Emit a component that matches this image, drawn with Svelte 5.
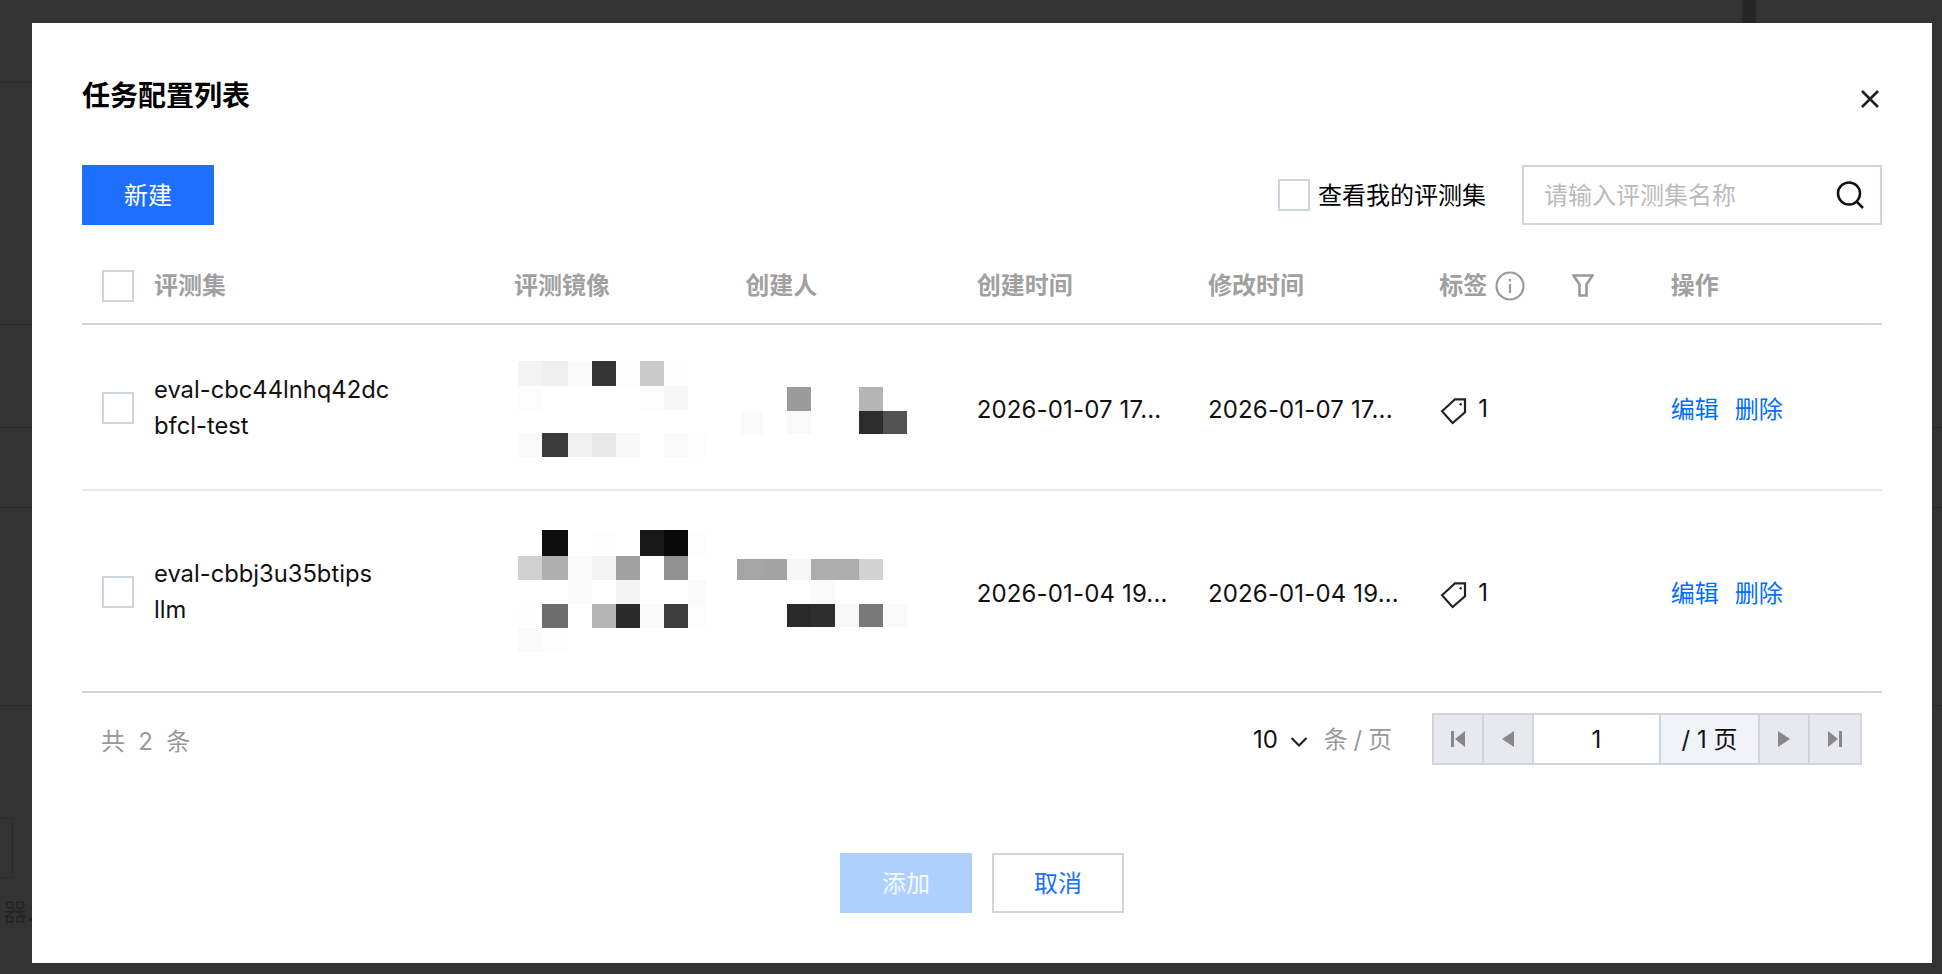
<script>
  // blurred cells: rows of [width in cols is fixed, colour or null]
  const wide = [24, 26, 24, 24, 24, 24, 24, 18]
  const even = [22, 24, 24, 24, 24, 24, 24, 24]
  const mosaics = {
    a: {
      cols: wide,
      rows: [25, 24, 23, 24],
      dx: 4,
      dy: 4,
      cells: [
        ['#f3f3f3', '#efefef', '#fbfbfb', '#333333', '#fdfdfd', '#cacaca', '#fcfcfc', null],
        ['#fcfcfc', null, null, null, null, '#fcfcfc', '#f6f6f6', null],
        [null, null, null, null, null, null, null, null],
        ['#fafafa', '#3b3b3b', '#f0f0f0', '#e8e8e8', '#f8f8f8', null, '#f9f9f9', '#fdfdfd']
      ]
    },
    b: {
      cols: even,
      rows: [24, 23],
      dx: -4,
      dy: 7,
      cells: [
        [null, null, '#9b9b9b', null, null, '#b5b5b5', null, null],
        ['#fafafa', null, '#f9f9f9', null, null, '#2d2d2d', '#525252', null]
      ]
    },
    c: {
      cols: wide,
      rows: [26, 24, 24, 24, 24],
      dx: 4,
      dy: 0,
      cells: [
        [null, '#0e0e0e', null, '#fdfdfd', null, '#181818', '#090909', '#fdfdfd'],
        ['#d1d1d1', '#b0b0b0', '#fbfbfb', '#f3f3f3', '#a1a1a1', null, '#919191', null],
        [null, null, '#fbfbfb', null, '#f4f4f4', null, null, '#fafafa'],
        ['#fefefe', '#6c6c6c', null, '#b4b4b4', '#2b2b2b', '#f9f9f9', '#3e3e3e', '#fdfdfd'],
        ['#fafafa', '#fdfdfd', null, null, null, null, null, null]
      ]
    },
    d: {
      cols: [26, 24, 24, 24, 24, 24, 24],
      rows: [21, 24, 23],
      dx: -8,
      dy: 3,
      cells: [
        ['#a5a5a5', '#a3a3a3', '#f7f7f7', '#adadad', '#adadad', '#d2d2d2', null],
        [null, null, null, '#fafafa', null, null, null],
        [null, null, '#2a2a2a', '#2e2e2e', '#f8f8f8', '#797979', '#fafafa']
      ]
    }
  }

  const rows = [
    { name: ['eval-cbc44lnhq42dc', 'bfcl-test'], image: mosaics.a, owner: mosaics.b, created: '2026-01-07 17...', updated: '2026-01-07 17...' },
    { name: ['eval-cbbj3u35btips', 'llm'], image: mosaics.c, owner: mosaics.d, created: '2026-01-04 19...', updated: '2026-01-04 19...' }
  ]
</script>

{#snippet mosaic(m)}
  <div
    class="mosaic"
    style="grid-template-columns: {m.cols.map((c) => c + 'px').join(' ')}; grid-template-rows: {m.rows.map((r) => r + 'px').join(' ')}; margin: {m.dy}px 0 0 {m.dx}px"
  >
    {#each m.cells as line}
      {#each line as colour}
        <span style="background: {colour ?? 'transparent'}"></span>
      {/each}
    {/each}
  </div>
{/snippet}

<div class="page">
  <i class="bg-line short" style="top: 82px"></i>
  <i class="bg-line short" style="top: 324px"></i>
  <i class="bg-line" style="top: 427px"></i>
  <i class="bg-line" style="top: 507px"></i>
  <i class="bg-line" style="top: 705px"></i>
  <i class="bg-strip"></i>
  <i class="bg-box"></i>
  <span class="bg-text">器.</span>

  <div class="dialog">
    <header class="head">
      <h2>任务配置列表</h2>
      <button class="close" aria-label="关闭">
        <svg width="20" height="20" viewBox="0 0 20 20"><path d="M2 2l16 16M18 2L2 18" stroke="#1f1f1f" stroke-width="2.6" fill="none" /></svg>
      </button>
    </header>

    <div class="toolbar">
      <button class="btn primary">新建</button>
      <div class="tools">
        <label class="mine"><span class="check"></span><span class="lift">查看我的评测集</span></label>
        <div class="search">
          <span class="placeholder lift">请输入评测集名称</span>
          <svg width="28" height="28" viewBox="0 0 28 28" fill="none" stroke="#111" stroke-width="2.5">
            <circle cx="13" cy="12.5" r="11" />
            <path d="M20.5 20.5l6.5 6.5" />
          </svg>
        </div>
      </div>
    </div>

    <div class="table">
      <div class="tr th">
        <div class="td first"><span class="check"></span>评测集</div>
        <div class="td">评测镜像</div>
        <div class="td">创建人</div>
        <div class="td">创建时间</div>
        <div class="td">修改时间</div>
        <div class="td tags">
          标签
          <svg class="info" width="30" height="30" viewBox="0 0 30 30" fill="none" stroke="#999" stroke-width="2.2">
            <circle cx="15" cy="15" r="13.5" />
            <path d="M15 13v9" />
            <path d="M15 8v2.6" />
          </svg>
          <svg class="filter" width="22" height="23" viewBox="0 0 22 23" fill="none" stroke="#999" stroke-width="2.6">
            <path d="M1.5 1.5h19l-6 9v11h-7v-11z" />
          </svg>
        </div>
        <div class="td">操作</div>
      </div>

      {#each rows as row, i}
        <div class="tr body" class:second={i === 1}>
          <div class="td first shift">
            <span class="check"></span>
            <div class="name">{row.name[0]}<br />{row.name[1]}</div>
          </div>
          <div class="td">{@render mosaic(row.image)}</div>
          <div class="td">{@render mosaic(row.owner)}</div>
          <div class="td date">{row.created}</div>
          <div class="td date">{row.updated}</div>
          <div class="td tagcount">
            <svg width="28" height="28" viewBox="0 0 28 28" fill="none" stroke="#222" stroke-width="2.2">
              <path d="M3 14.200L16 2.300h10v13L13.600 26z" />
              <circle cx="21.700" cy="7.300" r="1.200" fill="#222" stroke="none" />
            </svg>
            <span>1</span>
          </div>
          <div class="td actions"><a href="#edit">编辑</a><a href="#delete">删除</a></div>
        </div>
      {/each}

      <div class="pager">
        <span class="total">共 2 条</span>
        <div class="size">
          <span>10</span>
          <svg width="18" height="12" viewBox="0 0 18 12" fill="none" stroke="#222" stroke-width="2.200"><path d="M1.500 2l7.500 7.500L16.500 2" /></svg>
          <span class="unit">条 / 页</span>
        </div>
        <div class="pages">
          <button class="nav" aria-label="首页">
            <svg width="16" height="18" viewBox="0 0 16 18" fill="#888"><path d="M1 1h3v16H1zM15 1v16L5 9z" /></svg>
          </button>
          <button class="nav" aria-label="上一页">
            <svg width="14" height="18" viewBox="0 0 14 18" fill="#888"><path d="M13 1v16L1 9z" /></svg>
          </button>
          <div class="current">1</div>
          <div class="count">/ 1 页</div>
          <button class="nav" aria-label="下一页">
            <svg width="14" height="18" viewBox="0 0 14 18" fill="#888"><path d="M1 1v16l12-8z" /></svg>
          </button>
          <button class="nav" aria-label="末页">
            <svg width="16" height="18" viewBox="0 0 16 18" fill="#888"><path d="M1 1v16l10-8zM12 1h3v16h-3z" /></svg>
          </button>
        </div>
      </div>
    </div>

    <footer class="foot">
      <button class="btn disabled">添加</button>
      <button class="btn ghost">取消</button>
    </footer>
  </div>
</div>

<style>
  :global(body) {
    margin: 0;
    background: #333;
  }

  .page {
    position: relative;
    height: 974px;
    padding: 23px 10px 11px 32px;
    box-sizing: border-box;
    overflow: hidden;
    font-family: Inter, "Noto Sans CJK SC", sans-serif;
    font-size: 24px;
    line-height: 36px;
    color: #111;
  }

  .bg-line {
    position: absolute;
    left: 0;
    right: 0;
    height: 1px;
    background: #2b2b2b;
  }

  .bg-line.short {
    right: auto;
    width: 32px;
  }

  .bg-strip {
    position: absolute;
    top: 0;
    left: 1742px;
    width: 14px;
    height: 23px;
    background: #262626;
  }

  .bg-box {
    position: absolute;
    top: 818px;
    left: -2px;
    width: 13px;
    height: 58px;
    border: 1px solid #2a2a2a;
  }

  .bg-text {
    position: absolute;
    top: 895px;
    left: 3px;
    color: #242424;
  }

  .dialog {
    position: relative;
    height: 100%;
    padding: 0 50px;
    box-sizing: border-box;
    background: #fff;
  }

  .head {
    display: flex;
    justify-content: space-between;
    height: 142px;
  }

  h2 {
    margin: 53px 0 0;
    font-size: 28px;
    line-height: 40px;
    font-weight: 700;
    color: #000;
  }

  .close {
    width: 20px;
    height: 20px;
    margin: 66px 2px 0 0;
    padding: 0;
    border: 0;
    background: none;
  }

  .close svg,
  .nav svg {
    display: block;
  }

  .toolbar {
    display: flex;
    justify-content: space-between;
    align-items: center;
    height: 60px;
  }

  .btn {
    width: 132px;
    height: 60px;
    padding: 2px 0 0;
    border: 0;
    font: inherit;
  }

  .primary {
    background: #1d6fff;
    color: #fff;
  }

  .disabled {
    background: #aed0ff;
    color: #f6faff;
  }

  .ghost {
    border: 2px solid #cfd5de;
    background: #fff;
    color: #1d6fff;
  }

  .tools {
    display: flex;
    align-items: center;
    gap: 36px;
  }

  .mine {
    display: flex;
    align-items: center;
    gap: 8px;
    color: #000;
  }

  .lift {
    margin-top: 2px;
  }

  .check {
    display: block;
    flex: none;
    width: 32px;
    height: 32px;
    box-sizing: border-box;
    border: 2px solid #cfd5de;
    background: #fff;
  }

  .search {
    display: flex;
    justify-content: space-between;
    align-items: center;
    width: 360px;
    height: 60px;
    padding: 0 16px 0 20px;
    box-sizing: border-box;
    border: 2px solid #cfd5de;
  }

  .placeholder {
    color: #bbb;
  }

  .tr {
    display: grid;
    grid-template-columns: 412px repeat(6, 1fr);
  }

  .td {
    display: flex;
    align-items: center;
    padding-left: 20px;
    min-width: 0;
    white-space: nowrap;
  }

  .first {
    gap: 20px;
  }

  .th {
    height: 100px;
    padding-top: 23px;
    box-sizing: border-box;
    border-bottom: 2px solid #cfd5de;
    font-weight: 600;
    color: #a0a0a0;
  }

  .tags {
    position: relative;
  }

  .info {
    margin-left: 8px;
  }

  .filter {
    margin-left: 47px;
  }

  .body {
    height: 166px;
    box-sizing: border-box;
    border-bottom: 2px solid #e7e8f0;
  }

  .second {
    height: 202px;
    border-bottom-color: #cfd5de;
  }

  .shift {
    padding-top: 2px;
  }

  .name {
    font-size: 23.75px;
  }

  .date {
    padding-top: 6px;
    letter-spacing: 0.15px;
  }

  .mosaic {
    display: grid;
  }

  .tagcount {
    gap: 11px;
    padding-top: 8px;
  }

  .tagcount span {
    margin-top: -5px;
  }

  .actions {
    gap: 16px;
    padding-top: 6px;
  }

  .actions a {
    color: #006eff;
    text-decoration: none;
  }

  .pager {
    display: flex;
    align-items: center;
    height: 70px;
    padding: 22px 20px 0;
    box-sizing: border-box;
  }

  .total {
    margin: 6px auto 0 -1px;
    word-spacing: 6.5px;
    color: #999;
  }

  .size {
    display: flex;
    align-items: center;
    margin: 2px 40px 0 0;
  }

  .size svg {
    margin: 4px 16px 0 12px;
  }

  .unit {
    word-spacing: -1px;
    color: #999;
  }

  .pages {
    display: flex;
    height: 52px;
    box-sizing: border-box;
    border: 2px solid #cfd5de;
  }

  .pages > * {
    display: flex;
    align-items: center;
    justify-content: center;
    box-sizing: border-box;
    border: 0;
    border-right: 2px solid #cfd5de;
    padding: 0;
  }

  .pages > *:last-child {
    border-right: 0;
  }

  .nav {
    width: 50px;
    background: #e7e9ee;
  }

  .current,
  .count {
    padding-top: 2px;
  }

  .current {
    width: 127px;
    background: #fff;
  }

  .count {
    width: 99px;
    background: #f2f3f8;
  }

  .foot {
    display: flex;
    justify-content: center;
    gap: 20px;
    margin-top: 90px;
  }
</style>
